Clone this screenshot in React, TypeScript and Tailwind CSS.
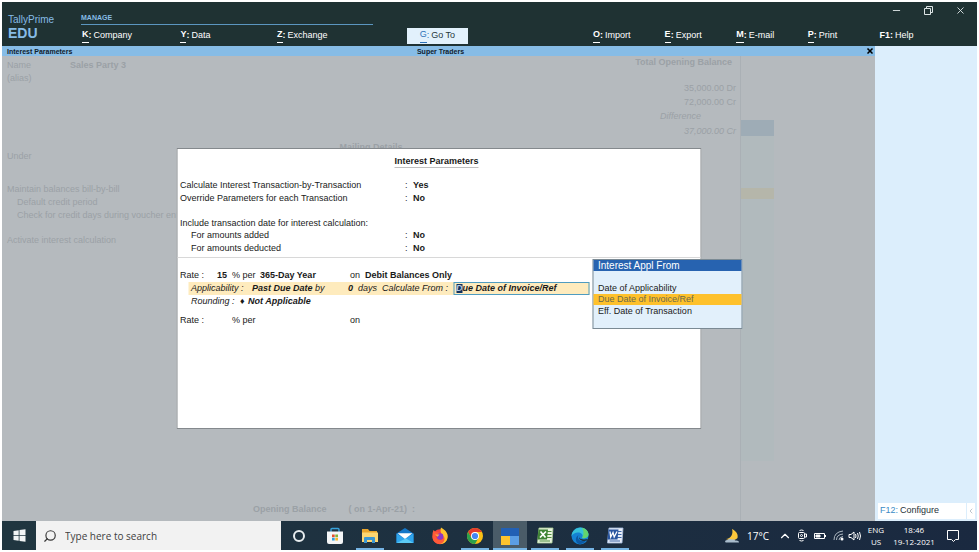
import { Minus, X, Search, ChevronUp, ChevronLeft } from 'lucide-react';
import type { ReactNode } from 'react';

interface MenuItem {
  k: string;
  label: string;
  width: string;
  active?: boolean;
}

const menu: MenuItem[] = [
  { k: 'K', label: 'Company', width: 'w-[11%]' },
  { k: 'Y', label: 'Data', width: 'w-[10.8%]' },
  { k: 'Z', label: 'Exchange', width: 'w-[14.5%]' },
  { k: 'G', label: 'Go To', width: 'w-[20.8%]', active: true },
  { k: 'O', label: 'Import', width: 'w-[8%]' },
  { k: 'E', label: 'Export', width: 'w-[8%]' },
  { k: 'M', label: 'E-mail', width: 'w-[8%]' },
  { k: 'P', label: 'Print', width: 'w-[8%]' },
  { k: 'F1', label: 'Help', width: 'w-[8%]' },
];

function Header() {
  return (
    <header className="flex h-11 bg-[#1f3233] text-white">
      <div className="w-[79px] shrink-0 pl-1.5 pt-[11px] text-[#86bce6]">
        <div className="text-[10px] leading-[13px]">TallyPrime</div>
        <div className="text-[14px] leading-[15px] font-bold">EDU</div>
      </div>
      <div className="flex min-w-0 flex-1 flex-col">
        <div className="flex h-[23px] justify-between">
          <div className="flex w-[32.6%] items-end border-b border-[#5b96c0] pb-0.5 text-[7px] leading-[9px] font-bold text-[#86bce6]">
            MANAGE
          </div>
          <div className="flex items-start gap-[21px] pt-[3px] pr-[11px] text-[#dde5e6]">
            <button aria-label="Minimize"><Minus size={11} strokeWidth={2} /></button>
            <button aria-label="Restore">
              <svg width="11" height="11" viewBox="0 0 11 11" fill="none" stroke="currentColor">
                <path d="M1.5 3.500H7.500V9.500H1.500ZM3.500 3.500V1.500H9.500V7.500H7.500" />
              </svg>
            </button>
            <button aria-label="Close"><X size={11} strokeWidth={2} /></button>
          </div>
        </div>
        <nav className="flex flex-1 pt-[3px] pl-px text-[9px]">
          {menu.map((m) => (
            <div key={m.k} className={`flex min-w-0 ${m.width}`}>
              <button
                className={`flex h-4 items-center gap-[2px] ${
                  m.active ? 'w-[61px] justify-center bg-[#e2f1fc] text-[#27383c]' : ''
                }`}
              >
                <span className={`flex ${m.active ? 'text-[#2c71b8]' : 'font-bold'}`}>
                  <span className={m.k === 'F1' ? '' : 'border-b border-current leading-[11px]'}>{m.k}</span>:
                </span>
                {m.label}
              </button>
            </div>
          ))}
        </nav>
      </div>
    </header>
  );
}

// Ledger master screen, dimmed while the dialog is open
function LedgerScreen() {
  return (
    <div className="flex h-full text-[9px] leading-[13px] text-[#9ba1a6]">
      <div className="flex flex-1 flex-col">
        <div className="flex justify-between pl-[5px] pr-1">
          <div className="pt-[3px]">
            <div className="flex">
              <span className="w-[63px]">Name</span>
              <b>Sales Party 3</b>
            </div>
            <div>(alias)</div>
          </div>
          <div className="text-right">
            <b className="mr-1">Total Opening Balance</b>
            <div className="mt-3 leading-[14px]">35,000.00 Dr</div>
            <div className="leading-[14px]">72,000.00 Cr</div>
            <div className="mr-[35px] leading-[15px] italic">Difference</div>
            <div className="leading-[14px] italic">37,000.00 Cr</div>
          </div>
        </div>
        <b className="mt-[3px] text-center">Mailing Details</b>
        <div className="-mt-1 pl-[5px]">
          <div>Under</div>
          <div className="mt-5">Maintain balances bill-by-bill</div>
          <div className="pl-2.5">Default credit period</div>
          <div className="pl-2.5">Check for credit days during voucher entry</div>
          <div className="mt-3">Activate interest calculation</div>
        </div>
        <div className="mt-auto flex gap-[22px] pb-[5px] pl-[251px]">
          <b>Opening Balance</b>
          <b>( on 1-Apr-21)&nbsp; :</b>
        </div>
      </div>
      <div className="w-[135px] border-l border-[#aab0b5]">
        <div className="mt-16 h-4 w-[33px] bg-[#9eacb6]" />
        <div className="h-[52px] w-[33px] bg-[#b1babd]" />
        <div className="h-[11px] w-[33px] bg-[#b5b6aa]" />
        <div className="h-[262px] w-[33px] bg-[#b1babd]" />
      </div>
    </div>
  );
}

function Question({ label, value, indent }: { label: string; value: string; indent?: boolean }) {
  return (
    <div className="flex">
      <dt className={`w-[225px] ${indent ? 'pl-[11px]' : ''}`}>{label}</dt>
      <dd className="flex">
        <span className="w-2">:</span>
        <b>{value}</b>
      </dd>
    </div>
  );
}

function CalculateFromList() {
  return (
    <div className="absolute top-[110px] left-[415px] w-[150px] border border-[#7b8a94] bg-[#e2f0fb] text-[9px]">
      <div className="h-[11px] bg-[#2763b0] pl-[5px] text-[10px] leading-[11px] text-white">Interest Appl From</div>
      <ul role="listbox" aria-label="Interest Appl From" className="pt-[11px] pb-[11px] leading-[12px]">
        <li role="option" aria-selected="false" className="h-3 pl-[5px]">Date of Applicability</li>
        <li role="option" aria-selected="true" className="h-[11px] bg-[#fec12c] pl-[5px] leading-[11px] text-[#6b6a4c]">Due Date of Invoice/Ref</li>
        <li role="option" aria-selected="false" className="h-3 pl-[5px]">Eff. Date of Transaction</li>
      </ul>
    </div>
  );
}

function InterestDialog() {
  return (
    <section
      role="dialog"
      aria-labelledby="dlg-title"
      className="absolute top-[92px] left-1/2 h-[281px] w-[525px] -translate-x-1/2 border border-[#84898d] bg-white text-[9px] leading-[13px] text-[#1a1a1a]"
    >
      <h1 id="dlg-title" className="mt-[6px] flex justify-center pr-1 font-bold">
        <span className="border-b border-[#c0c0c0] leading-[12px]">Interest Parameters</span>
      </h1>
      <dl className="mt-[11px] pl-[3px]">
        <Question label="Calculate Interest Transaction-by-Transaction" value="Yes" />
        <Question label="Override Parameters for each Transaction" value="No" />
        <dt className="mt-3 leading-[12px]">Include transaction date for interest calculation:</dt>
        <Question label="For amounts added" value="No" indent />
        <Question label="For amounts deducted" value="No" indent />
      </dl>
      <div className="mt-[2px] border-t border-[#d8d8d8]" />
      <div className="mt-[11px] flex pl-[3px]">
        <span className="w-[37px]">Rate :</span>
        <b className="w-[15px]">15</b>
        <span className="w-[28px]">% per</span>
        <b className="w-[90px]">365-Day Year</b>
        <span className="w-[15px]">on</span>
        <b>Debit Balances Only</b>
      </div>
      <div className="ml-[11px] flex h-[13px] w-[401px] items-center bg-[#feebbd] pl-[3px] italic">
        <span className="w-[61px] shrink-0">Applicability :</span>
        <b className="w-[63px] shrink-0">Past Due Date</b>
        <span className="w-[33px] shrink-0">by</span>
        <b className="w-[10px] shrink-0">0</b>
        <span className="w-[24px] shrink-0">days</span>
        <label htmlFor="calc-from" className="w-[71px] shrink-0">Calculate From :</label>
        <div className="relative flex-1">
          <input
            id="calc-from"
            type="text"
            defaultValue="Due Date of Invoice/Ref"
            className="block h-[13px] w-full border border-[#4f9cc0] bg-[#feebbd] pl-[2px] font-bold italic outline-none"
          />
          <span aria-hidden="true" className="absolute top-[2px] left-[3px] h-[9px] w-[6px] bg-[#10305c] leading-[9px] font-bold text-[#b9cbe4]">D</span>
        </div>
      </div>
      <div className="flex pl-[14px] italic">
        <span className="w-[49px]">Rounding :</span>
        <b className="w-2 not-italic">♦</b>
        <b>Not Applicable</b>
      </div>
      <div className="mt-[6px] flex pl-[3px]">
        <span className="w-[52px]">Rate :</span>
        <span className="w-[118px]">% per</span>
        <span>on</span>
      </div>
      <CalculateFromList />
    </section>
  );
}

function StoreIcon() {
  return (
    <svg width="18" height="18" viewBox="0 0 18 18">
      <path d="M5 5V2.500Q5 1.500 6 1.500H12Q13 1.500 13 2.500V5" fill="none" stroke="#38a3dc" strokeWidth="1.400" />
      <path d="M1 4.500H17V15Q17 17 15 17H3Q1 17 1 15Z" fill="#f4f6f7" />
      <path d="M6 7.500H8.700V10.200H6Z" fill="#e2512f" />
      <path d="M9.300 7.500H12V10.200H9.300Z" fill="#7db43b" />
      <path d="M6 10.800H8.700V13.500H6Z" fill="#2f9fdd" />
      <path d="M9.300 10.800H12V13.500H9.300Z" fill="#f5b92e" />
    </svg>
  );
}

function FolderIcon() {
  return (
    <svg width="18" height="18" viewBox="0 0 18 18">
      <path d="M1 2H7L8.500 4H16V15H1Z" fill="#e9a52c" />
      <path d="M1 5.500H17V15H1Z" fill="#fcd672" />
      <path d="M3 16V11Q3 10 4 10H13Q14 10 14 11V16H11V13H6V16Z" fill="#3b97d3" />
    </svg>
  );
}

function MailIcon() {
  return (
    <svg width="18" height="18" viewBox="0 0 18 18">
      <path d="M0.500 6.500L9 1L17.500 6.500V16H0.500Z" fill="#1477c8" />
      <path d="M0.500 6.500L9 12L17.500 6.500V16H0.500Z" fill="#2fa5ec" />
      <path d="M1.500 6.300H16.500L9 12Z" fill="#fff" />
      <path d="M0.500 16L10 11.500L17.500 16Z" fill="#5ccbf5" />
    </svg>
  );
}

function FirefoxIcon() {
  return (
    <svg width="18" height="18" viewBox="0 0 18 18">
      <circle cx="9" cy="9.800" r="7.500" fill="#f4433f" />
      <path d="M10 0.500C14 3 17.500 6 16.500 11C15.500 16 11 17.500 8 17C13 15 13 10 11.500 8C9.500 6.500 9 3 10 0.500Z" fill="#ffc52e" />
      <path d="M2.500 3L4.500 5L8 5.500L7 8L4.500 9Q5.500 13 9 13Q12.500 12.500 12.500 9C15 12 13 16.500 8.500 17C4 17 1 13 1.500 9Q1.500 5 2.500 3Z" fill="#ff5a39" />
      <circle cx="9.200" cy="9.500" r="3.200" fill="#8b38c9" />
      <path d="M4 7.500H8.500L6.500 9.700Z" fill="#ffab38" />
    </svg>
  );
}

function ChromeIcon() {
  return (
    <svg width="18" height="18" viewBox="0 0 18 18">
      <circle cx="9" cy="9" r="8" fill="#fbc116" />
      <path d="M9 5H15.930A8 8 0 0 0 2.070 5L5.500 11Z" fill="#e33b2e" />
      <path d="M2.070 5A8 8 0 0 0 9 17L12.500 11L5.500 11Z" fill="#2ca14c" />
      <circle cx="9" cy="9" r="4" fill="#fff" />
      <circle cx="9" cy="9" r="3.100" fill="#4486f4" />
    </svg>
  );
}

function TallyIcon() {
  return (
    <svg width="18" height="18" viewBox="0 0 18 18">
      <path d="M0 1H18V9H0Z" fill="#2260b4" />
      <path d="M0 9H9V18H0Z" fill="#ffc42d" />
      <path d="M9 9H18V18H9Z" fill="#5b9ee4" />
    </svg>
  );
}

function ExcelIcon() {
  return (
    <svg width="18" height="18" viewBox="0 0 18 18">
      <path d="M3 1H17L16 16H1.500Z" fill="#e9f3e0" stroke="#a9cc95" strokeWidth="0.800" />
      <path d="M11 4.500H15.500M11 7.500H15.500M11 10.500H15.500M3.500 14H14" stroke="#4d8f3b" strokeWidth="1.200" />
      <path d="M2.500 2.500H12L11 12.500H1.500Z" fill="#3f8435" />
      <path d="M4.500 4.500L9.500 10.500M10 4.500L4 10.500" stroke="#fff" strokeWidth="1.700" />
    </svg>
  );
}

function EdgeIcon() {
  return (
    <svg width="18" height="18" viewBox="0 0 18 18">
      <circle cx="9" cy="9" r="8.500" fill="#1583d3" />
      <path d="M0.500 9C1 4 5 0.500 9.500 0.500C14 0.500 17.500 4 17.500 7.500C17.500 10.500 14 11.800 11 11C13 8 10.500 5.500 7 5.500C4 5.500 2 7 0.500 9Z" fill="#36c2d9" />
      <path d="M11 0.700C15 1.500 17.500 4.500 17.500 7.500C17.500 10.500 14 11.800 11 11C13 8 13 4 11 0.700Z" fill="#63d46c" />
      <path d="M7.500 8C5.500 12 9 15.500 15 13.500C13 16.500 10 17.500 7.500 16.700C4 15 4 10 7.500 8Z" fill="#0c59a4" />
      <path d="M8.500 8.500C7 11 9.500 13.500 17 12L16 13.600C11 15 6.500 12.500 8.500 8.500Z" fill="#1e3340" />
    </svg>
  );
}

function WordIcon() {
  return (
    <svg width="18" height="18" viewBox="0 0 18 18">
      <path d="M3 1H17L16 16H1.500Z" fill="#e8eef8" stroke="#a4bbdd" strokeWidth="0.800" />
      <path d="M11 4.500H15.500M11 7.500H15.500M11 10.500H15.500M3.500 14H14" stroke="#3c66a8" strokeWidth="1.200" />
      <path d="M2.500 2.500H12.500L11.500 12.500H1.500Z" fill="#2a56a0" />
      <path d="M4 4.500L4.700 10L7 5.500L8.200 10L11 4.500" fill="none" stroke="#fff" strokeWidth="1.300" />
    </svg>
  );
}

const apps: { name: string; icon: ReactNode; state: string }[] = [
  { name: 'Microsoft Store', icon: <StoreIcon />, state: 'w-7 border-transparent' },
  { name: 'File Explorer', icon: <FolderIcon />, state: 'w-7 border-[#76b4e4]' },
  { name: 'Mail', icon: <MailIcon />, state: 'w-7 border-transparent' },
  { name: 'Firefox', icon: <FirefoxIcon />, state: 'w-7 border-transparent' },
  { name: 'Chrome', icon: <ChromeIcon />, state: 'w-7 border-[#76b4e4]' },
  { name: 'TallyPrime', icon: <TallyIcon />, state: '-mx-[3px] w-[34px] border-[#76b4e4] bg-[#4a5c68]' },
  { name: 'Excel', icon: <ExcelIcon />, state: 'w-7 border-[#76b4e4]' },
  { name: 'Edge', icon: <EdgeIcon />, state: 'w-7 border-[#76b4e4]' },
  { name: 'Word', icon: <WordIcon />, state: 'w-7 border-[#76b4e4]' },
];

function Tray() {
  return (
    <div className="ml-auto flex items-center pr-[17px] font-['Open_Sans','Noto_Sans',sans-serif] text-[9px] text-white">
      <svg width="16" height="16" viewBox="0 0 16 16" aria-label="Weather">
        <path d="M8 1C12 3 14.500 6 13.500 10C11 13 6 13 2 11C7 10.500 9.500 6 8 1Z" fill="#fcc73b" />
        <path d="M1 14Q1 11.500 4 12Q5 10 7.500 11.500Q11 10.500 11 12.500Q15 12 15 14.500H2Z" fill="#a9bccb" />
      </svg>
      <span className="ml-[7px] pt-0.5 text-[10px]">17°C</span>
      <ChevronUp size={14} className="ml-[9px]" />
      <svg width="11" height="13" viewBox="0 0 11 13" className="ml-[5px]" fill="none" stroke="currentColor">
        <rect x="1.500" y="3.500" width="6" height="6" rx="1" />
        <circle cx="4.500" cy="6.500" r="1" />
        <path d="M7.500 5H9.500V8H7.500M2.500 1.500Q4.500 0.500 6.500 1.500M2.500 11.500Q4.500 12.500 6.500 11.500" />
      </svg>
      <svg width="12" height="8" viewBox="0 0 12 8" className="ml-[6px]" fill="none" stroke="currentColor">
        <path d="M0.500 1.500H10.500V6.500H0.500ZM11.500 3V5" />
        <path d="M2 3H6V5H2Z" fill="currentColor" />
      </svg>
      <svg width="11" height="11" viewBox="0 0 11 11" className="ml-[7px]" fill="none" stroke="#aeb9c2">
        <path d="M1 10Q1 2 10 1M3.500 10Q3.500 4.500 10 4M6 10Q6 7 10 6.500" />
        <circle cx="9" cy="9" r="1.500" fill="#fff" stroke="none" />
      </svg>
      <svg width="14" height="12" viewBox="0 0 14 12" className="ml-[4px]" fill="none" stroke="currentColor">
        <path d="M1 4.500H3L6 2V10L3 7.500H1ZM7.500 4Q8.500 6 7.500 8M9.500 3Q11 6 9.500 9M11.500 2Q13.500 6 11.500 10" />
      </svg>
      <div className="ml-[5px] w-[18px] text-center text-[8px] leading-[12px]">ENG<br />US</div>
      <div className="ml-[8px] w-[42px] text-center text-[8px] leading-[12px]">18:46<br />19-12-2021</div>
      <button aria-label="Notifications" className="ml-[11px]">
        <svg width="14" height="14" viewBox="0 0 14 14" fill="none" stroke="currentColor">
          <path d="M1.500 1.500H12.500V10.500H9.500L7.500 12.500L5.500 10.500H1.500Z" />
        </svg>
      </button>
    </div>
  );
}

function Taskbar() {
  return (
    <footer className="flex h-[29px] bg-linear-to-r from-[#203640] to-[#1a2940]">
      <button aria-label="Start" className="flex w-[34px] items-center justify-center">
        <svg width="13" height="13" viewBox="0 0 13 13" fill="#f2f5f6">
          <path d="M0.500 2L5.700 1.200V6H0.500ZM6.500 1.100L12.500 0.300V6H6.500ZM0.500 6.800H5.700V11.800L0.500 11ZM6.500 6.800H12.500V12.700L6.500 11.900Z" />
        </svg>
      </button>
      <label className="flex w-[245px] items-center gap-2 bg-[#f2f2f2] pl-[7px] text-[#383838]">
        <Search size={14} strokeWidth={2} className="shrink-0 -scale-x-100" />
        <input
          type="text"
          aria-label="Search"
          placeholder="Type here to search"
          className="w-full min-w-0 pt-px font-['Open_Sans','Noto_Sans',sans-serif] text-[10px] outline-none placeholder:text-[#404040]"
        />
      </label>
      <button aria-label="Cortana" className="flex w-9 items-center justify-center">
        <span className="size-3 rounded-full border-2 border-[#e8edef]" />
      </button>
      <div className="flex gap-[7px] pl-1">
        {apps.map((a) => (
          <button
            key={a.name}
            aria-label={a.name}
            className={`flex items-center justify-center border-b-2 pt-0.5 ${a.state}`}
          >
            {a.icon}
          </button>
        ))}
      </div>
      <Tray />
    </footer>
  );
}

export default function App() {
  return (
    <div className="flex min-h-screen flex-col bg-white p-0.5 font-['Liberation_Sans',Arial,sans-serif]">
      <Header />
      <div className="flex flex-1">
        <main className="flex min-w-0 flex-1 flex-col">
          <div className="grid h-[10px] grid-cols-3 items-center bg-[#86bce6] pr-px pl-[5px] text-[7px] leading-[9px] font-bold text-[#10202c]">
            <span>Interest Parameters</span>
            <span className="text-center">Super Traders</span>
            <button aria-label="Close screen" className="flex justify-end text-black">
              <X size={8} strokeWidth={5} />
            </button>
          </div>
          <div className="relative flex-1 bg-[#b5babe]">
            <LedgerScreen />
            <InterestDialog />
          </div>
        </main>
        <aside className="flex w-[102px] flex-col justify-end bg-[#dceefc] pb-0.5">
          <div className="flex h-4 items-stretch gap-px pr-0.5 pl-[3px] text-[9px]">
            <button className="flex flex-1 items-center gap-[2px] bg-white pl-[2px] text-[#26323a]">
              <span className="text-[#3b8bc6]">F12:</span>Configure
            </button>
            <button aria-label="Collapse panel" className="flex w-2 items-center bg-white text-[#9aa8b2]">
              <ChevronLeft size={8} />
            </button>
          </div>
        </aside>
      </div>
      <Taskbar />
    </div>
  );
}
